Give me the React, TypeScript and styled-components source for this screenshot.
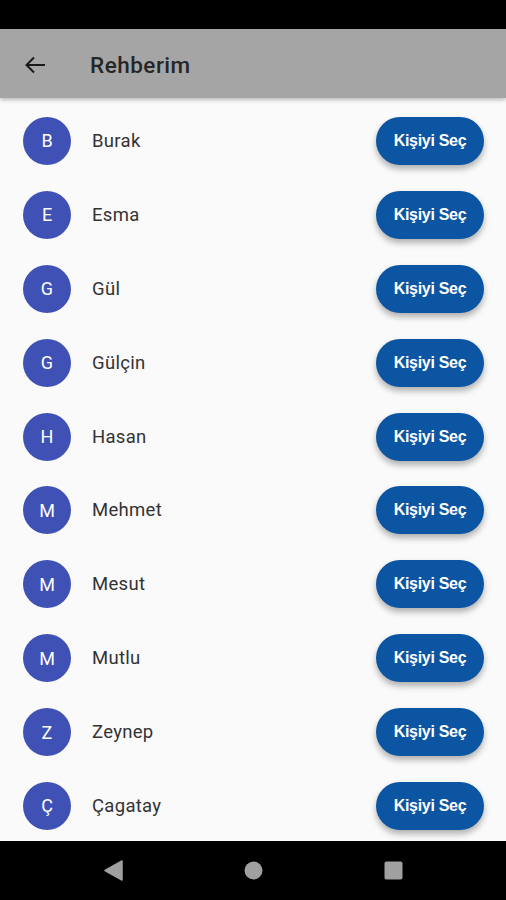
import React from 'react';
import styled, { createGlobalStyle } from 'styled-components';

const GlobalStyle = createGlobalStyle`
  html, body {
    margin: 0;
    padding: 0;
    background: #000;
  }
  * {
    box-sizing: border-box;
  }
`;

const Screen = styled.div`
  width: 506px;
  height: 900px;
  display: flex;
  flex-direction: column;
  background: #fafafa;
  font-family: Roboto, 'Noto Sans', sans-serif;
  overflow: hidden;
`;

const StatusBar = styled.div`
  height: 29px;
  flex: none;
  background: #000;
`;

const AppBar = styled.header`
  height: 69px;
  flex: none;
  display: flex;
  align-items: center;
  background: #a5a5a5;
  box-shadow: 0 2px 4px rgba(0, 0, 0, 0.25);
  position: relative;
  z-index: 2;
`;

const BackButton = styled.div`
  width: 70px;
  height: 69px;
  display: flex;
  align-items: center;
  padding: 2px 0 0 24px;
`;

const Title = styled.h1`
  margin: 2px 0 0 20px;
  font-size: 22.5px;
  font-weight: 500;
  color: #262626;
  letter-spacing: 0.5px;
`;

const List = styled.div`
  flex: 1;
  min-height: 0;
  display: flex;
  flex-direction: column;
  padding-top: 6px;
  overflow: hidden;
`;

const Row = styled.div`
  height: 73.9px;
  flex: none;
  display: flex;
  align-items: center;
  padding: 0 22px 0 23px;
`;

const Avatar = styled.div`
  width: 48px;
  height: 48px;
  border-radius: 50%;
  background: #3f51b5;
  color: #fff;
  font-size: 18px;
  display: flex;
  align-items: center;
  justify-content: center;
  flex: none;
`;

const Name = styled.span`
  flex: 1;
  margin-left: 21px;
  font-size: 18.5px;
  letter-spacing: 0.3px;
  color: #333;
`;

const PickButton = styled.button`
  width: 108px;
  height: 48px;
  border: none;
  border-radius: 24px;
  background: #0b55a3;
  color: #fff;
  font-family: 'Liberation Sans', Arial, sans-serif;
  font-weight: 700;
  font-size: 16px;
  letter-spacing: -0.3px;
  box-shadow: 0 4px 6px rgba(0, 0, 0, 0.3);
  padding: 0;
`;

const NavBar = styled.nav`
  height: 59px;
  flex: none;
  background: #000;
  display: flex;
  align-items: center;
  justify-content: center;
  gap: 80px;
  position: relative;
  z-index: 2;
`;

const NavSlot = styled.div`
  width: 60px;
  display: flex;
  justify-content: center;
`;

const contacts = ['Burak', 'Esma', 'Gül', 'Gülçin', 'Hasan', 'Mehmet', 'Mesut', 'Mutlu', 'Zeynep', 'Çagatay'];

export default function App() {
  return (
    <>
      <GlobalStyle />
      <Screen>
        <StatusBar />
        <AppBar>
          <BackButton>
            <svg width="22" height="18" viewBox="0 0 22 18">
              <path d="M21 9H2.5M10 1.5 2.5 9l7.5 7.5" fill="none" stroke="#1a1a1a" strokeWidth="2" />
            </svg>
          </BackButton>
          <Title>Rehberim</Title>
        </AppBar>
        <List>
          {contacts.map((name) => (
            <Row key={name}>
              <Avatar>{name.charAt(0)}</Avatar>
              <Name>{name}</Name>
              <PickButton>Kişiyi Seç</PickButton>
            </Row>
          ))}
        </List>
        <NavBar>
          <NavSlot>
            <svg width="20" height="21" viewBox="0 0 20 21">
              <path d="M19 1 L19 20 L2 10.5 Z" fill="#a0a0a0" strokeLinejoin="round" stroke="#a0a0a0" strokeWidth="1.5" />
            </svg>
          </NavSlot>
          <NavSlot>
            <svg width="19" height="19" viewBox="0 0 19 19">
              <circle cx="9.5" cy="9.5" r="9" fill="#a0a0a0" />
            </svg>
          </NavSlot>
          <NavSlot>
            <svg width="19" height="19" viewBox="0 0 19 19">
              <rect x="0.5" y="0.5" width="18" height="18" rx="2" fill="#a0a0a0" />
            </svg>
          </NavSlot>
        </NavBar>
      </Screen>
    </>
  );
}
